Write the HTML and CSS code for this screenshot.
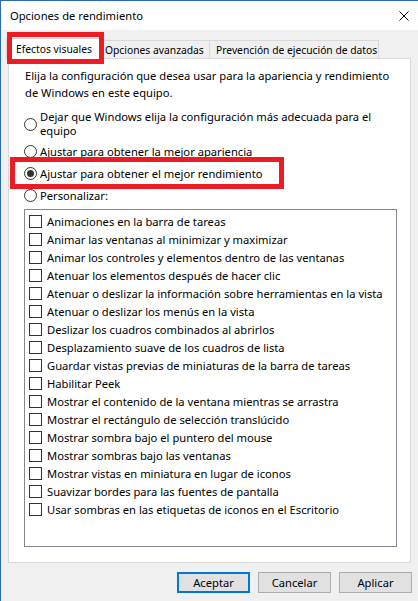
FILE: index.html
```html
<!DOCTYPE html>
<html lang="es">
<head>
<meta charset="utf-8">
<title>Opciones de rendimiento</title>
<link rel="stylesheet" href="styles.css">
</head>
<body>
<div class="window">
  <div class="titlebar">
    <span class="title">Opciones de rendimiento</span>
    <svg class="close" width="10" height="10" viewBox="0 0 10 10"><path d="M0.5 0.5 L9.5 9.5 M9.5 0.5 L0.5 9.5" stroke="#000" stroke-width="1" fill="none"/></svg>
  </div>
  <div class="body">
    <div class="tabs">
      <div class="tab active">Efectos visuales<span class="mark mark-tab"></span></div>
      <div class="tab tab2">Opciones avanzadas</div>
      <div class="tab tab3">Prevención de ejecución de datos</div>
    </div>
    <div class="panel">
      <p class="desc">Elija la configuración que desea usar para la apariencia y rendimiento<br>de Windows en este equipo.</p>
      <div class="radio r1"><span class="circle"></span><span class="label">Dejar que Windows elija la configuración más adecuada para el<br>equipo</span></div>
      <div class="radio"><span class="circle"></span><span class="label">Ajustar para obtener la mejor apariencia</span></div>
      <div class="radio"><span class="circle on"></span><span class="label">Ajustar para obtener el mejor rendimiento</span><span class="mark mark-radio"></span></div>
      <div class="radio"><span class="circle"></span><span class="label">Personalizar:</span></div>
      <div class="list">
        <div class="item"><span class="box"></span>Animaciones en la barra de tareas</div>
        <div class="item"><span class="box"></span>Animar las ventanas al minimizar y maximizar</div>
        <div class="item"><span class="box"></span>Animar los controles y elementos dentro de las ventanas</div>
        <div class="item"><span class="box"></span>Atenuar los elementos después de hacer clic</div>
        <div class="item"><span class="box"></span>Atenuar o deslizar la información sobre herramientas en la vista</div>
        <div class="item"><span class="box"></span>Atenuar o deslizar los menús en la vista</div>
        <div class="item"><span class="box"></span>Deslizar los cuadros combinados al abrirlos</div>
        <div class="item"><span class="box"></span>Desplazamiento suave de los cuadros de lista</div>
        <div class="item"><span class="box"></span>Guardar vistas previas de miniaturas de la barra de tareas</div>
        <div class="item"><span class="box"></span>Habilitar Peek</div>
        <div class="item"><span class="box"></span>Mostrar el contenido de la ventana mientras se arrastra</div>
        <div class="item"><span class="box"></span>Mostrar el rectángulo de selección translúcido</div>
        <div class="item"><span class="box"></span>Mostrar sombra bajo el puntero del mouse</div>
        <div class="item"><span class="box"></span>Mostrar sombras bajo las ventanas</div>
        <div class="item"><span class="box"></span>Mostrar vistas en miniatura en lugar de iconos</div>
        <div class="item"><span class="box"></span>Suavizar bordes para las fuentes de pantalla</div>
        <div class="item"><span class="box"></span>Usar sombras en las etiquetas de iconos en el Escritorio</div>
      </div>
    </div>
    <div class="buttons">
      <button class="btn default">Aceptar</button>
      <button class="btn">Cancelar</button>
      <button class="btn">Aplicar</button>
    </div>
  </div>
</div>
</body>
</html>
```
FILE: styles.css
```css
* { box-sizing: border-box; }
html, body { margin: 0; padding: 0; }
body {
  width: 418px;
  height: 601px;
  overflow: hidden;
  background: #f0f0f0;
  font-family: "Noto Sans", "Open Sans", sans-serif;
  font-size: 11.2px;
  color: #000;
}
.window {
  height: 601px;
  border-left: 1px solid #2b6cb0;
  border-top: 1px solid #2b6cb0;
}
.titlebar {
  height: 29px;
  background: #fff;
  display: flex;
  align-items: center;
  justify-content: space-between;
  padding: 0 9px;
}
.title { line-height: 16px; }
.close { display: block; }
.body {
  padding: 8px 7px 0 7px;
}
.tabs {
  display: flex;
  align-items: flex-end;
  height: 20px;
  font-size: 10.3px;
}
.tab {
  position: relative;
  height: 18px;
  border: 1px solid #d9d9d9;
  border-bottom: none;
  background: #f0f0f0;
  display: flex;
  align-items: center;
  white-space: nowrap;
}
.tab.active {
  z-index: 2;
  height: 21px;
  width: 97px;
  margin-left: -2px;
  margin-bottom: -1px;
  background: #fff;
  padding-left: 9px;
}
.tab2 {
  width: 111px;
  margin-left: -4px;
  padding-left: 5px;
  z-index: 1;
}
.tab3 {
  width: 170px;
  margin-left: -1px;
  padding-left: 6px;
}
.mark {
  position: absolute;
  border: 5px solid #ec1c24;
  pointer-events: none;
}
.mark-tab {
  left: 0;
  top: -7px;
  width: 97px;
  height: 32px;
}
.panel {
  height: 505px;
  background: #fff;
  border: 1px solid #d9d9d9;
  padding: 8px 0 0 15px;
}
.desc {
  margin: 0 0 9px 1px;
  line-height: 17px;
}
.radio {
  position: relative;
  display: flex;
  align-items: center;
  gap: 3px;
  min-height: 22px;
}
.radio.r1 {
  line-height: 14px;
  min-height: 28px;
  margin-bottom: 2px;
}
.circle {
  flex: none;
  width: 13px;
  height: 13px;
  border: 1px solid #333;
  border-radius: 50%;
  background: #fff;
  display: flex;
  align-items: center;
  justify-content: center;
}
.circle.on::after {
  content: "";
  width: 7px;
  height: 7px;
  border-radius: 50%;
  background: #333;
}
.mark-radio {
  left: -14px;
  top: -5px;
  width: 274px;
  height: 32px;
}
.list {
  margin-top: 3px;
  width: 373px;
  height: 338px;
  border: 1px solid #828790;
  background: #fff;
  padding: 2px 0 0 4px;
}
.item {
  height: 18px;
  display: flex;
  align-items: center;
  gap: 5px;
  white-space: nowrap;
}
.box {
  flex: none;
  width: 13px;
  height: 13px;
  border: 1px solid #333;
  background: #fff;
}
.buttons {
  display: flex;
  justify-content: flex-end;
  gap: 8px;
  margin-top: 9px;
  margin-right: -1px;
}
.btn {
  width: 73px;
  height: 21px;
  padding: 0;
  border: 1px solid #adadad;
  background: #e1e1e1;
  font: inherit;
  color: #000;
}
.btn.default {
  border: 2px solid #0078d7;
}
```
